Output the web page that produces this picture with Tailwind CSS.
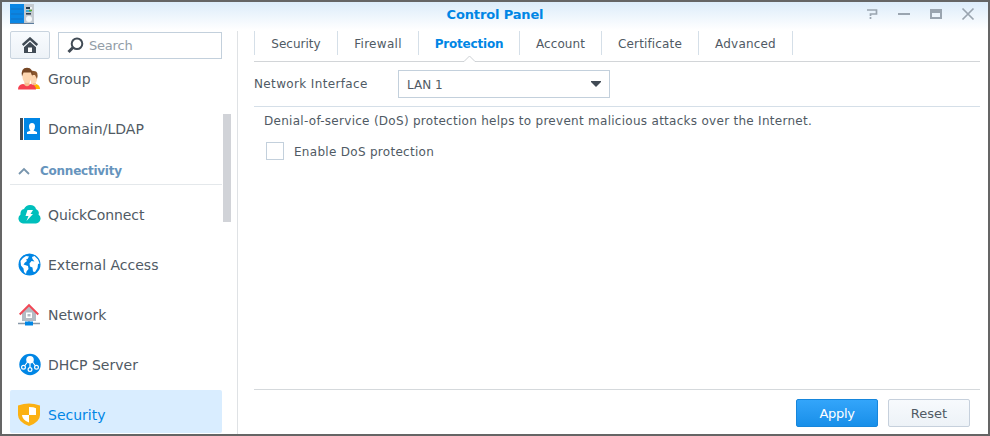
<!DOCTYPE html>
<html lang="en">
<head>
<meta charset="utf-8">
<title>Control Panel</title>
<script src="https://cdn.jsdelivr.net/npm/@tailwindcss/browser@4"></script>
</head>
<body class="h-[436px] w-[990px] overflow-hidden font-['DejaVu_Sans',Verdana,sans-serif] text-[12px] text-[#505a64]">
<div class="flex h-[436px] w-[990px] flex-col border-2 border-[#656565] bg-white bg-linear-to-b from-[#dcecfa] to-white to-[28px]">
  <header class="relative flex h-[29px] shrink-0 items-start justify-between pr-3 pl-2">
    <svg class="mt-[2px]" width="24" height="20" viewBox="0 0 24 20">
      <rect x="14" width="10" height="20" fill="#c3cad1"/><rect width="14" height="20" fill="#0a86e4"/>
      <path d="M1 5h12M1 10h12M1 15h12" stroke="#1272c4"/><path d="M0 19.500h24" stroke="#5c7c9c"/>
      <path d="M16 4h4" stroke="#273746" stroke-width="2"/><path d="M20 4h2" stroke="#eef2f5" stroke-width="2"/><path d="M16 7h5" stroke="#18a0d8" stroke-width="1.500"/><path d="M19 6.500h3" stroke="#5ca82f" stroke-width="1.500"/><path d="M16 9.800h5" stroke="#273746" stroke-width="1.500"/>
      <circle cx="19" cy="15" r="3" fill="#f5f8fa"/>
    </svg>
    <h1 class="absolute inset-x-0 top-[4px] text-center text-[13px] leading-[18px] font-bold tracking-[-0.15px] text-[#0086e5]">Control Panel</h1>
    <svg class="mt-[5px]" width="110" height="16" viewBox="0 0 110 16" fill="none" stroke="#9aa5b0" stroke-width="2">
      <path d="M1 3h9.500v4H4.500v2M4.500 10v2" stroke-width="1.700"/><path d="M32 7h12"/><path d="M65 3v8h10V3z"/><path d="M64 4h12" stroke-width="4"/><path d="M96.500 1.500l11 11M107.500 1.500l-11 11" stroke-width="1.700"/>
    </svg>
  </header>
  <div class="flex min-h-0 flex-1">
    <aside class="relative flex w-[236px] shrink-0 flex-col border-r border-[#dfe2e5] pl-2">
      <div class="flex h-[28px] shrink-0 gap-2">
        <button class="flex h-[28px] w-[40px] items-center justify-center rounded-[2px] border border-[#c9d4df] bg-linear-to-b from-[#f8fbfe] to-[#edf2f7]">
          <svg width="16" height="16" viewBox="0 0 16 16" fill="#414b55"><path d="M8 4.800L14 10.200V16H2v-5.800z"/><path d="M.7 8L8 1.500 15.300 8" fill="none" stroke="#f3f7fa" stroke-width="4.200"/><path d="M.7 8L8 1.500 15.300 8" fill="none" stroke="#414b55" stroke-width="2.400"/><path d="M6 10.500h4V15H6z" fill="#fff"/></svg>
        </button>
        <div class="mt-px flex h-[27px] w-[164px] items-center border border-[#c3d0dc] bg-white pl-2">
          <svg width="17" height="17" viewBox="0 0 17 17" fill="none" stroke="#414b55"><circle cx="10" cy="6.700" r="5.300" stroke-width="2"/><path d="M6 10.500L1.500 15" stroke-width="3"/></svg>
          <span class="ml-[5px] text-[13px] tracking-[-0.2px] text-[#929da7]">Search</span>
        </div>
      </div>
      <nav class="flex min-h-0 w-[212px] flex-col overflow-hidden text-[14px]">
        <a class="-mt-[5px] flex h-[50px] shrink-0 items-center gap-[7px] pl-2">
          <svg width="23" height="24" viewBox="0 0 23 24"><path d="M15 22v-4l3-1q4 1 4 5z" fill="#ffb400"/><path d="M13 7h6v6q-1 4-4 4h-2z" fill="#fdd6b0"/><path d="M12 5q1-2 4-1 5 0 3 8l-2-4-3 0z" fill="#8b572e"/><path d="M15 16h3v2h-3z" fill="#f7bf91"/><path d="M0 22.500q0-5 5-5.500l4 1 4-1q5 1 5 5.500z" fill="#f5404f"/><path d="M6.500 14h5v4q-2.500 2.500-5 0z" fill="#f7bf91"/><path d="M4.500 5h9v6q-1 5-4.500 5T4.500 11z" fill="#fdd6b0"/><path d="M4 9.500Q2.500 .8 9 .8t5.300 8.700L13 5.500H5.500z" fill="#764624"/></svg>
          <span>Group</span></a>
        <a class="flex h-[50px] shrink-0 items-center gap-[7px] pl-2">
          <svg width="23" height="24" viewBox="0 0 23 24"><path d="M2 1h3v22H2z" fill="#414b55"/><path d="M6 1h16v22H6z" fill="#0086e5"/><path d="M11 9.500q0-3.500 3-3.500t3 3.500q0 2.500-1.500 4l3.500 1.500v2H9v-2l3.500-1.500q-1.500-1.500-1.500-4" fill="#fff"/></svg>
          <span class="tracking-[0.05px]">Domain/LDAP</span></a>
        <div class="flex h-[31px] shrink-0 items-center border-b border-[#e4e8eb] pl-2">
          <svg class="mt-[3px]" width="12" height="8" viewBox="0 0 12 8" fill="none" stroke="#7895ad" stroke-width="1.800"><path d="M1 7l5-5 5 5"/></svg>
          <span class="mt-[3px] ml-[10px] text-[12px] font-bold tracking-[-0.25px] text-[#6694bd]">Connectivity</span>
        </div>
        <a class="mt-[5px] flex h-[50px] shrink-0 items-center gap-[7px] pl-2">
          <svg width="23" height="24" viewBox="0 0 23 24"><path d="M6 20.500H5a5 5 0 0 1-2.500-9Q2 7 6 6q2-4 6-4 5 0 6 4 4 2 2.500 5.500a5 5 0 0 1-2.500 9z" fill="#00bfbc"/><path d="M9.500 7H15l-2.500 4H15l-6.500 7 2-5H7.500z" fill="#fff"/></svg>
          <span class="tracking-[-0.1px]">QuickConnect</span></a>
        <a class="flex h-[50px] shrink-0 items-center gap-[7px] pl-2">
          <svg width="23" height="24" viewBox="0 0 23 24"><circle cx="11.500" cy="11.500" r="11" fill="#0086e5"/><path d="M2.500 8L5 5l3-2 3 .5L9.500 6 8 6.500 9 8l-2 1.500-1.500 2L7 12l3 1 .5 3L8.500 18.500 8 21l-2-2-.5-3.500L3 12.500zM14 4l2.500-1 3.500 3.500 1.500 4-1.500.5-.5 4L17 19l-2-.5-.5-4-2.500-1-.5-3L13.500 8l3 .5L14.500 6z" fill="#fff"/></svg>
          <span>External Access</span></a>
        <a class="flex h-[50px] shrink-0 items-center gap-[7px] pl-2">
          <svg width="23" height="24" viewBox="0 0 23 24"><path d="M4 10l7-6.500L18 10v8H4z" fill="#b3bbc3"/><path d="M8 9.500h6v5.500H8z" fill="#fff"/><path d="M9.500 11h3v2.500h-3z" fill="#b3bbc3"/><path d="M1.700 11.500L11 2.200l9.300 9.300" fill="none" stroke="#f04856" stroke-width="2"/><path d="M11 18v2M0 20.500h22" stroke="#8798a8" stroke-width="1.300"/><path d="M7 18.500h8v4H7z" fill="#0086e5"/></svg>
          <span>Network</span></a>
        <a class="flex h-[50px] shrink-0 items-center gap-[7px] pl-2">
          <svg width="23" height="24" viewBox="0 0 23 24"><circle cx="12" cy="11.500" r="10.700" fill="#0086e5"/><g fill="none" stroke="#fff" stroke-width="1.200"><path d="M9.500 9l-3 4M12 9v5M14.500 9l3 4"/><circle cx="5.500" cy="14.300" r="1.900"/><circle cx="12" cy="16.500" r="1.900"/><circle cx="18.500" cy="14.300" r="1.900"/></g><circle cx="12" cy="6.800" r="3.800" fill="#fff"/></svg>
          <span>DHCP Server</span></a>
        <a class="flex h-[43px] shrink-0 items-start gap-[7px] rounded-[2px] bg-[#d9edff] pt-[13px] pl-2 text-[#0086e5]">
          <svg width="23" height="24" viewBox="0 0 23 24"><path d="M0 2.500Q6 .5 11 .5t11 2V12q0 7-11 11Q0 19 0 12z" fill="#fbb113"/><path d="M11 4q5 0 7 1.200V12h-7zM11 12H4q0 4.500 7 7.500z" fill="#fff"/></svg>
          <span class="mt-[2px]">Security</span></a>
      </nav>
      <div class="absolute top-[83px] right-[6px] h-[108px] w-[8px] bg-[#d1d3d8]"></div>
    </aside>
    <main class="flex min-w-0 flex-1 flex-col pr-[8px] pl-[16px]">
      <div class="relative h-[31px] shrink-0 border-b border-[#d2d5d8] text-[12px]">
        <div class="flex h-[24px] border-l border-[#d5dfe8] leading-[26px] *:border-r *:border-[#d5dfe8] *:text-center">
          <span class="w-[83px]">Security</span><span class="w-[81px] tracking-[0.3px]">Firewall</span><span class="w-[101px] font-bold tracking-[-0.2px] text-[#0086e5]">Protection</span><span class="w-[82px] tracking-[0.1px]">Account</span><span class="w-[97px] tracking-[0.15px]">Certificate</span><span class="w-[94px] tracking-[0.2px]">Advanced</span>
        </div>
        <svg class="absolute top-[24px] left-[209px]" width="13" height="8" viewBox="0 0 13 8"><path d="M0 6.500h1l5.500-5.500L12 6.500h1V8H0z" fill="#fff"/><path d="M0 6.500h1L6.500 1 12 6.500h1" fill="none" stroke="#cdd1d5"/></svg>
      </div>
      <div class="flex h-[45px] shrink-0 items-center border-b border-[#d5dfe8]">
        <label class="w-[144px] tracking-[0.36px]">Network Interface</label>
        <div class="flex h-[28px] w-[212px] items-center justify-between border border-[#c3d0dc] pr-[7px] pl-2"><span class="mt-px">LAN 1</span>
          <svg width="12" height="6" viewBox="0 0 12 6"><path d="M1 0h10v1L6 6 1 1z" fill="#414b55"/></svg></div>
      </div>
      <p class="mt-[5px] h-[18px] shrink-0 pl-[10px] leading-[18px] tracking-[0.28px] whitespace-nowrap">Denial-of-service (DoS) protection helps to prevent malicious attacks over the Internet.</p>
      <label class="mt-[12px] flex h-[18px] items-center gap-[10px] pl-[12px]"><span class="size-[18px] border border-[#c3d0dc]"></span><span class="mt-px tracking-[0.29px]">Enable DoS protection</span></label>
      <footer class="mt-auto flex h-[45px] shrink-0 justify-end gap-[10px] border-t border-[#d5d9dc] pt-[9px] pr-[10px] text-[13px]">
        <button class="h-[28px] w-[82px] rounded-[2px] border border-[#1686dc] bg-linear-to-b from-[#33a5fa] to-[#178fe9] pt-px tracking-[-0.3px] text-white">Apply</button>
        <button class="h-[28px] w-[82px] rounded-[2px] border border-[#c6d0dc] bg-linear-to-b from-[#f7fafd] to-[#edf2f7] pt-px">Reset</button>
      </footer>
    </main>
  </div>
</div>
</body>
</html>
